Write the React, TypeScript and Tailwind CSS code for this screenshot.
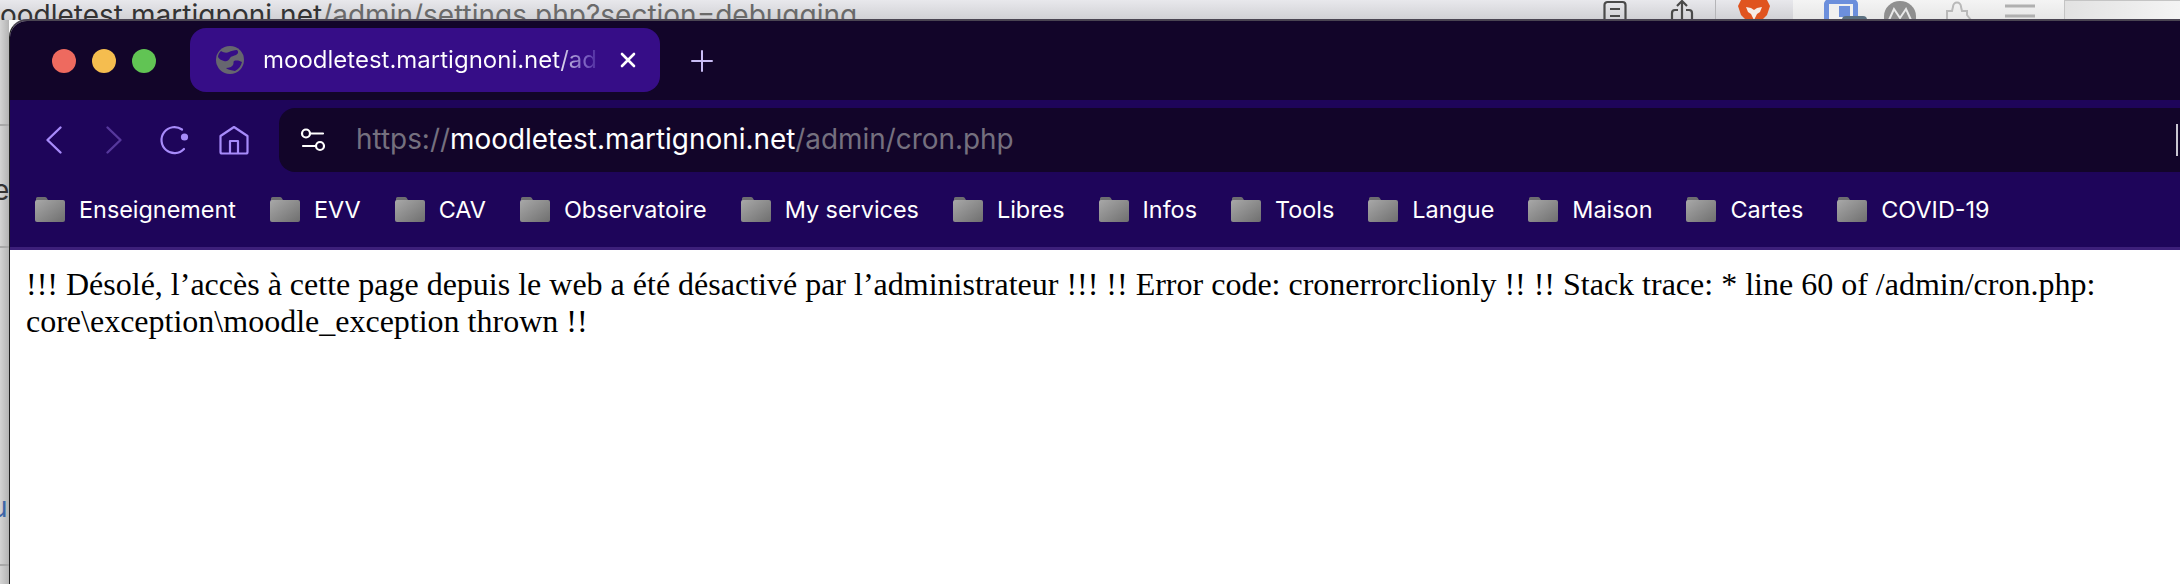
const bookmarks = ["Enseignement", "EVV", "CAV", "Observatoire", "My services", "Libres", "Infos", "Tools", "Langue", "Maison", "Cartes", "COVID-19"]

const FolderIcon = () => (
    <svg width="30" height="26" viewBox="0 0 30 26" className="shrink-0">
        <defs>
            <linearGradient id="folderFill" x1="0" y1="0" x2="1" y2="1">
                <stop offset="0" stopColor="#a8a8a8" />
                <stop offset="1" stopColor="#6f6f6f" />
            </linearGradient>
        </defs>
        <path d="M1 5V2.5A1.5 1.5 0 0 1 2.5 1h7.5a2 2 0 0 1 1.6.8L13 4z" fill="#6d6d70" />
        <rect x="0" y="4" width="30" height="22" rx="2" fill="url(#folderFill)" />
    </svg>
)

const Globe = () => (
    <svg width="28" height="28" viewBox="0 0 28 28">
        <circle cx="14" cy="14" r="14" fill="#66666f" />
        <path d="M5 5c3 2 6 2 8 1s5-2 8-2c2 2 1 4-1 5s-5 1-6 3-3 4-6 3-5-2-6-4c0-2 1-4 3-6z" fill="#360d87" />
        <path d="M18 15c3-1 6 0 8 1-1 4-3 7-7 9-3-1-7-1-9-3 3 0 6-1 7-3s0-3 1-4z" fill="#360d87" />
    </svg>
)

const TitleBar = () => (
    <div className="h-[79px] bg-[#120529] flex items-center shrink-0">
        <div className="flex gap-4 pl-[42px] mt-[1px] w-[180px] shrink-0">
            <span className="w-6 h-6 rounded-full bg-[#ee6a5f]" />
            <span className="w-6 h-6 rounded-full bg-[#f5bd4f]" />
            <span className="w-6 h-6 rounded-full bg-[#61c454]" />
        </div>
        <div className="w-[470px] h-16 self-start mt-[7px] rounded-[16px] bg-[#360d87] flex items-center pl-[26px] text-white font-['Inter',sans-serif] text-[24px] shrink-0">
            <Globe />
            <span className="ml-[19px] w-[333px] overflow-hidden whitespace-nowrap bg-[linear-gradient(90deg,#ffffff_88%,#b3a6d8_92%,#7a5fc0_97%,#4f2da0_100%)] bg-clip-text text-transparent">
                moodletest.martignoni.net/admin/cron.php
            </span>
            <svg width="16" height="16" viewBox="0 0 16 16" className="ml-[24px]" fill="none" stroke="#fff" strokeWidth="2.6" strokeLinecap="round">
                <path d="M2 2l12 12M14 2L2 14" />
            </svg>
        </div>
        <svg width="22" height="22" viewBox="0 0 22 22" className="ml-[31px]" fill="none" stroke="#c9bdf5" strokeWidth="2" strokeLinecap="round">
            <path d="M11 1v20M1 11h20" />
        </svg>
    </div>
)

const NavIcons = () => (
    <div className="w-[269px] shrink-0 flex items-center h-10">
        <svg width="20" height="30" viewBox="0 0 20 30" className="ml-[34px]" fill="none" stroke="#a78bfa" strokeWidth="2.4" strokeLinecap="round" strokeLinejoin="round">
            <path d="M16.5 2.5L3.5 15l13 12.5" />
        </svg>
        <svg width="20" height="30" viewBox="0 0 20 30" className="ml-[40px]" fill="none" stroke="#56389c" strokeWidth="2.4" strokeLinecap="round" strokeLinejoin="round">
            <path d="M3.5 2.5L16.5 15 3.5 27.5" />
        </svg>
        <svg width="32" height="30" viewBox="0 0 32 30" className="ml-[34px]" fill="none">
            <path d="M26 24A13 13 0 1 1 24 4.5" stroke="#a78bfa" strokeWidth="2.2" strokeLinecap="round" />
            <circle cx="26.5" cy="12" r="3.6" fill="#a78bfa" />
        </svg>
        <svg width="30" height="30" viewBox="0 0 30 30" className="ml-[29px]" fill="none" stroke="#a78bfa" strokeWidth="2.2" strokeLinejoin="round">
            <path d="M1.5 11L15 2l13.5 9v16a1.5 1.5 0 0 1-1.5 1.5H3A1.5 1.5 0 0 1 1.5 27zM11 28.5V16h8v12.5" />
        </svg>
    </div>
)

const AddressBar = () => (
    <div className="flex-1 h-16 bg-[#120529] rounded-l-[16px] flex items-center relative font-['Inter',sans-serif] text-[27.9px] whitespace-nowrap">
        <svg width="26" height="26" viewBox="0 0 26 26" className="ml-[21px]" fill="none" stroke="#fff" strokeWidth="2.2" strokeLinecap="round">
            <circle cx="6" cy="6.5" r="4" />
            <path d="M10 6.5h13M3 19h13" />
            <circle cx="20" cy="19" r="4" />
        </svg>
        <span className="ml-[30px] text-[#75707f]">https://<span className="text-white">moodletest.martignoni.net</span>/admin/cron.php</span>
        <span className="absolute right-[22px] top-4 w-[2px] h-8 bg-[#c9c6d1]" />
    </div>
)

const BookmarksBar = () => (
    <div className="flex-1 flex items-center pl-[25px] gap-[34px] text-white font-['Inter',sans-serif] text-[23.4px] border-b-[3px] border-[#3d1f7a]">
        {bookmarks.map((name) => (
            <div key={name} className="flex items-center gap-[14px] whitespace-nowrap">
                <FolderIcon />
                {name}
            </div>
        ))}
    </div>
)

// the window behind, only its top strip and left edge stay visible
const BehindWindow = () => (
    <div className="absolute inset-0 bg-[#fbfbfb]">
        <div className="h-5 overflow-hidden bg-[linear-gradient(180deg,#e8e8ec,#d0d0d4)] relative">
            <div className="absolute left-0 top-[-6px] font-['Inter',sans-serif] text-[28px] text-[#333] whitespace-nowrap">
                oodletest.martignoni.net<span className="text-[#6a6a6a]">/admin/settings.php?section=debugging</span>
            </div>
            <svg width="24" height="20" viewBox="0 0 24 20" className="absolute left-[1603px] top-0" fill="none" stroke="#4a4a4a" strokeWidth="2.2">
                <path d="M1.5 20V5a3 3 0 0 1 3-3h15a3 3 0 0 1 3 3v15M7 9h10M7 16h10" />
            </svg>
            <svg width="24" height="20" viewBox="0 0 24 20" className="absolute left-[1670px] top-0" fill="none" stroke="#4a4a4a" strokeWidth="2.2">
                <path d="M12 20V1M7 6l5-5 5 5M8 10H5a3 3 0 0 0-3 3v7M16 10h3a3 3 0 0 1 3 3v7" />
            </svg>
            <div className="absolute left-[1715px] top-0 w-[1px] h-5 bg-[#b5b5b8]" />
            <svg width="32" height="20" viewBox="0 0 32 20" className="absolute left-[1738px] top-0">
                <path d="M3 0h26l3 6-3 9-5 5H8l-5-5-3-9z" fill="#e0541f" />
                <path d="M8 7l5 1 3 2 3-2 5-1-2 5-3 2-3 6-3-6-3-2z" fill="#f6ece6" />
            </svg>
            <div className="absolute left-[1793px] top-0 w-[271px] h-5 bg-[linear-gradient(180deg,#f4f4f4,#e6e6e6)]">
                <svg width="271" height="20" viewBox="0 0 271 20" fill="none">
                    <path d="M33.5 20V4a2 2 0 0 1 2-2h25a2 2 0 0 1 2 2v16" stroke="#6c8fdc" strokeWidth="5" />
                    <rect x="36" y="4" width="24" height="16" fill="#f0f0f0" />
                    <rect x="46" y="6" width="11" height="11" fill="#6c8fdc" />
                    <rect x="49" y="16" width="25" height="8" rx="4" fill="#5b7080" />
                    <path d="M91 20V16a16 15 0 0 1 32 0v4z" fill="#8f8f8f" />
                    <path d="M96 20l5-11 6 9 6-9 5 11" stroke="#e8e8e8" strokeWidth="2" />
                    <path d="M154 20v-9h5l1-4c0-6 8-6 8 0l1 4h5v4l4 5" stroke="#b9b9b9" strokeWidth="2" />
                    <path d="M212 6h30M212 16h30" stroke="#b0b0b0" strokeWidth="3" />
                </svg>
            </div>
            <div className="absolute left-[2064px] top-0 right-0 h-5 border-t border-l border-[#c4c4c4] bg-[linear-gradient(90deg,#e2e2e2,#f4f4f4)]" />
        </div>
        <div className="absolute left-0 top-5 bottom-0 w-[9px] bg-[linear-gradient(90deg,#d4d4d4,#b4b4b4)]" />
        <div className="absolute left-0 top-[124px] w-[9px] h-[2px] bg-[#a8a8a8]" />
        <div className="absolute left-0 top-[246px] w-[9px] h-[2px] bg-[#a8a8a8]" />
        <div className="absolute left-0 top-[564px] w-[9px] h-[2px] bg-[#a8a8a8]" />
        <span className="absolute left-[-7px] top-[169px] font-['Inter',sans-serif] text-[28px] text-[#333]">e</span>
        <span className="absolute left-[-9px] top-[486px] font-['Inter',sans-serif] text-[28px] text-[#3d66a8]">u</span>
    </div>
)

export default function App() {
    return (
        <div className="relative w-[2180px] h-[584px] overflow-hidden">
            <BehindWindow />
            <div className="absolute left-[9px] top-[19px] right-[-20px] bottom-[-20px] rounded-tl-[18px] overflow-hidden border-t-2 border-l border-t-[#4a4552] border-l-[#222] flex flex-col bg-white">
                <TitleBar />
                <div className="h-[150px] bg-[#1e055a] flex flex-col shrink-0">
                    <div className="flex items-center pt-2 h-[72px] shrink-0">
                        <NavIcons />
                        <AddressBar />
                    </div>
                    <BookmarksBar />
                </div>
                <div className="pt-4 pl-4 pr-[60px] font-['Liberation_Serif',serif] text-[32px] leading-[37px] text-black">
                    !!! Désolé, l’accès à cette page depuis le web a été désactivé par l’administrateur !!! !! Error code: cronerrorclionly !! !! Stack trace: * line 60 of /admin/cron.php: core\exception\moodle_exception thrown !!
                </div>
            </div>
        </div>
    )
}
